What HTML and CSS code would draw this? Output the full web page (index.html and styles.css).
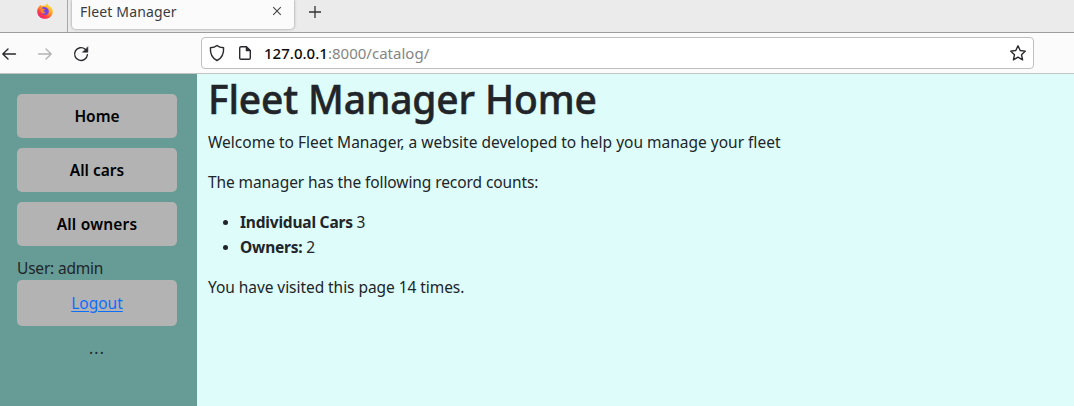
FILE: index.html
```html
<!DOCTYPE html>
<html lang="en">
<head>
<meta charset="utf-8">
<title>Fleet Manager</title>
<link rel="stylesheet" href="styles.css">
</head>
<body>
<div class="tabs">
  <div class="pinned">
    <svg width="16" height="16" viewBox="0 0 16 16">
      <defs>
        <linearGradient id="flame" x1="0.85" y1="0.1" x2="0.2" y2="1"><stop offset="0" stop-color="#ffe83f"/><stop offset=".4" stop-color="#ff9a27"/><stop offset=".72" stop-color="#ff3b47"/><stop offset="1" stop-color="#e91582"/></linearGradient>
      </defs>
      <path d="M2.2 3.4 3.2 1.8 4.6 3.3C6 2.4 7.4 2.5 8.3 2.8 8.7 1.6 9.6.7 10.5.2 10.8 2.2 12.4 2.8 13 4L13.6 3.7C15 5 15.8 6.7 15.8 8.4 15.8 12.5 12.2 15.8 8 15.8S.2 12.6.2 8.4C.2 6.4.9 4.6 2.2 3.4Z" fill="url(#flame)"/>
      <path d="M5 4.5C7 3.2 11.5 4.2 11.8 8 12 10.5 10 12 8 12S4.4 10.6 4.4 8.6C5.4 9.5 7 9 7.5 8.1L5.2 7Z" fill="#7542e5"/>
      <path d="M2.3 5.2C4 4.4 5 5 5.6 5.8L8 6.2C8 7.2 6.3 7.3 6 8 6 9.4 7.6 9.5 8.8 8.9 8 10.8 5.5 11 4.3 9.4 3.6 8.4 3.4 7 4 6.2Z" fill="#ff8b24"/>
    </svg>
  </div>
  <div class="tab">
    <span class="tab-title">Fleet Manager</span>
    <svg class="close" width="10" height="10" viewBox="0 0 10 10"><path d="M1.2 1.2 8.8 8.8M8.8 1.2 1.2 8.8"/></svg>
  </div>
  <svg class="new-tab" width="12" height="12" viewBox="0 0 12 12"><path d="M6 0V12M0 6H12"/></svg>
</div>
<div class="toolbar">
  <svg class="ico back" width="16" height="16" viewBox="0 0 16 16"><path d="M14.5 8H2M7 3 1.8 8 7 13"/></svg>
  <svg class="ico forward" width="16" height="16" viewBox="0 0 16 16"><path d="M1.5 8H14M9 3 14.2 8 9 13"/></svg>
  <svg class="ico reload" width="16" height="16" viewBox="0 0 16 16"><path d="M12.2 3.2A6.4 6.4 0 1 0 14.4 8.7"/><path class="solid" d="M14.9 1V6.3H9.6Z"/></svg>
  <div class="address">
    <svg class="ico shield" width="16" height="18" viewBox="0 0 16 18"><path d="M8 1.4C6.3 2.9 4 3.6 1.4 3.8 1.1 9.5 3 14.3 8 16.5 13 14.3 14.9 9.5 14.6 3.8 12 3.6 9.7 2.9 8 1.4Z"/></svg>
    <svg class="ico page" width="14" height="16" viewBox="0 0 14 16"><path d="M3 1.7H8.4L12.3 5.6V13Q12.3 14.3 11 14.3H3Q1.7 14.3 1.7 13V3Q1.7 1.7 3 1.7Z"/><path class="solid" d="M8 1.5V6H12.6Z"/></svg>
    <span class="url"><b>127.0.0.1</b>:8000/catalog/</span>
    <svg class="ico star" width="18" height="18" viewBox="0 0 18 18"><path d="M9 1.8 11.2 6.5 16.4 7.1 12.5 10.7 13.6 15.8 9 13.2 4.4 15.8 5.5 10.7 1.6 7.1 6.8 6.5Z"/></svg>
  </div>
</div>
<div class="content">
  <nav class="sidebar">
    <a class="button home">Home</a>
    <a class="button cars">All cars</a>
    <a class="button owners">All owners</a>
    <div class="user"><span>User: admin</span></div>
    <a class="button logout"><span>Logout</span></a>
    <div class="more">...</div>
  </nav>
  <main class="main">
    <h1><span>Fleet Manager Home</span></h1>
    <p class="welcome">Welcome to Fleet Manager, a website developed to help you manage your fleet</p>
    <p class="counts">The manager has the following record counts:</p>
    <ul>
      <li><b class="cars-label">Individual Cars</b> 3</li>
      <li><b class="owners-label">Owners:</b> 2</li>
    </ul>
    <p class="visits">You have visited this page 14 times.</p>
  </main>
</div>
</body>
</html>
```
FILE: styles.css
```css
* { box-sizing: border-box; }
body { margin: 0; width: 1074px; height: 406px; overflow: hidden; display: flex; flex-direction: column; font: 15.5px/24px "Noto Sans", sans-serif; color: #212529; }
svg { display: block; flex: none; }
.tabs { height: 33px; flex: none; display: flex; background: #ebebeb; border-bottom: 1px solid #9d9d9d; }
.pinned { width: 68px; border-right: 1px solid #a6a6a6; padding: 3px 0 0 37px; }
.tab { width: 222px; height: 29px; margin-left: 4px; padding: 0 12px 5px 8px; display: flex; align-items: center; justify-content: space-between; background: #fbfbfb; border-radius: 0 0 4px 4px; box-shadow: 0 0 3px rgba(0,0,0,.4); font-size: 14px; letter-spacing: .16px; color: #3a3a3f; }
.close { stroke: #444; stroke-width: 1.1; margin-bottom: 2px; }
.new-tab { margin: 6px 0 0 15px; stroke: #333; stroke-width: 1.3; }
.toolbar { height: 41px; flex: none; display: flex; align-items: center; background: #fbfbfb; border-bottom: 1px solid #c3c3c3; padding-left: 1px; }
.ico { fill: none; stroke: #29292e; stroke-width: 1.4; stroke-linecap: round; stroke-linejoin: round; }
.solid { fill: #29292e; stroke-width: .5; }
.back, .forward, .reload { margin-top: 2px; }
.forward { stroke: #b4b4b4; margin-left: 20px; }
.reload { margin-left: 20px; }
.address { width: 833px; height: 32px; margin-left: 112px; padding: 0 6px 0 7px; display: flex; align-items: center; background: #fff; border: 1px solid #bfbfbf; border-radius: 4px; }
.shield { margin-bottom: 1px; }
.page { margin-left: 13px; }
.url { margin-left: 12px; font-size: 15px; letter-spacing: .02px; color: #858585; }
.url b { font-weight: 500; color: #0c0c0d; }
.star { margin-left: auto; }
.content { flex: 1; display: flex; }
.sidebar { width: 197px; background: #669c95; padding: 20px 20px 0 17px; }
.button { display: flex; align-items: center; justify-content: center; height: 44px; margin-bottom: 10px; border-radius: 5px; background: #b3b3b3; color: #000; font-weight: 600; }
.owners { letter-spacing: .2px; }
.user { letter-spacing: -.2px; }
.logout { height: 46px; font-weight: 400; color: #0d6efd; text-decoration: underline; text-underline-offset: 2px; }
.more { text-align: center; letter-spacing: 1.2px; }
.main { flex: 1; background: #defcfa; padding-left: 11px; white-space: nowrap; }
h1 { margin: 0 0 8px; font-size: 39px; line-height: 49px; height: 48px; font-weight: 500; letter-spacing: -.15px; -webkit-text-stroke: .5px #212529; }
p { margin: 0 0 16px; }
.counts { letter-spacing: -.09px; }
.visits { letter-spacing: -.06px; }
ul { margin: 0 0 16px; padding-left: 32px; }
li { line-height: 24.5px; letter-spacing: -.2px; }
li::marker { font-size: 14px; }
li b { font-weight: 700; }
```
